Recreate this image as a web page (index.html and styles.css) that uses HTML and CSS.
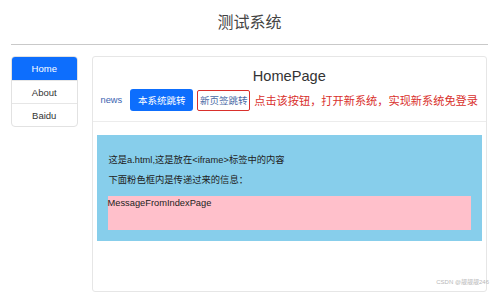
FILE: index.html
```html
<!DOCTYPE html>
<html lang="zh">
<head>
<meta charset="utf-8">
<title>测试系统</title>
<link rel="stylesheet" href="styles.css">
</head>
<body>
<header class="top">
  <h1 class="title">测试系统</h1>
</header>
<hr class="rule">
<div class="layout">
  <nav class="side">
    <a class="side-item active">Home</a>
    <a class="side-item">About</a>
    <a class="side-item">Baidu</a>
  </nav>
  <section class="card">
    <div class="card-head">
      <h2 class="page-title">HomePage</h2>
      <div class="actions">
        <a class="link">news</a>
        <button class="btn btn-primary">本系统跳转</button>
        <button class="btn btn-outline">新页签跳转</button>
        <span class="note">点击该按钮，打开新系统，实现新系统免登录</span>
      </div>
    </div>
    <div class="frame">
      <p class="frame-line">这是a.html,这是放在&lt;iframe&gt;标签中的内容</p>
      <p class="frame-line second">下面粉色框内是传递过来的信息：</p>
      <div class="msg">MessageFromIndexPage</div>
    </div>
  </section>
</div>
<div class="watermark">CSDN @靓靓靓246</div>
</body>
</html>
```
FILE: styles.css
```css
* { box-sizing: border-box; }
html, body { margin: 0; padding: 0; }
body {
  width: 499px;
  height: 304px;
  overflow: hidden;
  position: relative;
  background: #fff;
  font-family: "Liberation Sans", "Noto Sans CJK SC", sans-serif;
  color: #222;
}
.top {
  height: 44px;
  display: flex;
  align-items: center;
  justify-content: center;
}
.title {
  margin: 0;
  font-size: 16px;
  font-weight: normal;
  color: #444;
  line-height: 20px;
  padding-top: 1px;
}
.rule {
  margin: 0 11px;
  border: 0;
  border-top: 1px solid #c9c9c9;
  height: 0;
}
.layout {
  display: flex;
  align-items: flex-start;
  gap: 14px;
  margin: 11px 12px 0 11px;
}
.side {
  width: 68px;
  display: flex;
  flex-direction: column;
  border: 1px solid #e2e2e2;
  border-radius: 4px;
  overflow: hidden;
}
.side-item {
  height: 23px;
  display: flex;
  align-items: center;
  justify-content: center;
  font-size: 9.5px;
  color: #333;
  border-top: 1px solid #e6e6e6;
}
.side-item:first-child { border-top: 0; height: 23px; }
.side-item.active {
  background: #0d6efd;
  color: #fff;
}
.card {
  flex: 1;
  height: 236px;
  border: 1px solid #e6e6e6;
  border-radius: 3px;
}
.card-head {
  padding: 9px 8px 10px 8px;
  border-bottom: 1px solid #ececec;
}
.page-title {
  margin: 0;
  text-align: center;
  font-size: 14.6px;
  font-weight: normal;
  line-height: 20px;
  color: #333;
}
.actions {
  margin-top: 3px;
  height: 22px;
  display: flex;
  align-items: center;
}
.link {
  font-size: 9.3px;
  color: #3b63b0;
  margin-right: 8px;
}
.btn {
  font-family: inherit;
  font-size: 9.5px;
  border-radius: 3px;
  padding: 0;
  display: flex;
  align-items: center;
  justify-content: center;
}
.btn-primary {
  width: 63px;
  height: 22px;
  background: #0d6efd;
  color: #fff;
  border: 0;
}
.btn-outline {
  margin-left: 4px;
  width: 53px;
  height: 21px;
  background: #fff;
  color: #4a6aa6;
  border: 1.5px solid #d9302c;
  border-radius: 2px;
}
.note {
  margin-left: 4px;
  font-size: 11.2px;
  color: #d9302c;
  white-space: nowrap;
}
.frame {
  margin: 13px 4px 0 4px;
  height: 106px;
  background: #87ceeb;
  padding: 18px 11px 11px 11px;
}
.frame-line {
  margin: 0;
  font-size: 9.3px;
  line-height: 14px;
  color: #222;
  padding-left: 1px;
}
.frame-line.second { margin-top: 6px; }
.msg {
  margin-top: 9px;
  height: 34px;
  background: #ffc0cb;
  font-size: 9.3px;
  line-height: 14px;
  color: #222;
}
.watermark {
  position: absolute;
  right: 10px;
  top: 277px;
  font-size: 6px;
  color: #b8b8b8;
}
```
